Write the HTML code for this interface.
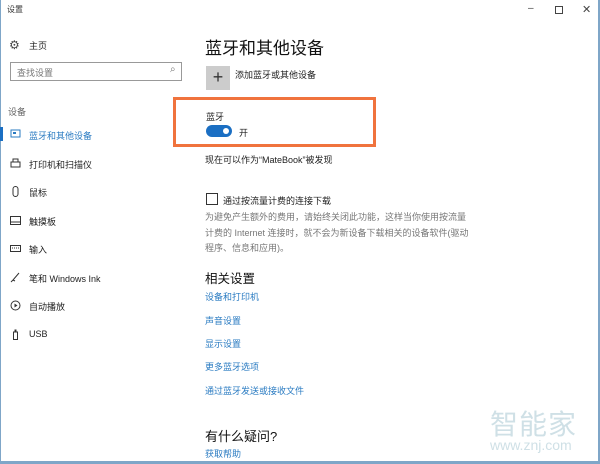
<!DOCTYPE html><html><head><meta charset="utf-8"><style>
*{margin:0;padding:0;box-sizing:border-box}
body{width:600px;height:464px;background:#fff;position:relative;overflow:hidden;font-family:"Liberation Sans","Noto Sans CJK SC",sans-serif;color:#222}
.a{position:absolute;white-space:nowrap}
.s{font-size:9px}
.l{font-size:9px;color:#2a7bc2}
.ic{position:absolute;left:10px;width:11px;height:11px}
</style></head><body>
<div class="a" style="left:0;top:0;width:1px;height:464px;background:#7fa6c8"></div>
<div class="a" style="right:0;top:0;width:2px;height:464px;background:#7fa6c8"></div>
<div class="a" style="left:0;top:461px;width:600px;height:3px;background:#7fa6c8"></div>
<div class="a" style="left:7px;top:4px;font-size:8px;color:#333">设置</div>
<div class="a" style="left:528px;top:3px;font-size:10px;color:#444">–</div>
<div class="a" style="left:555px;top:6px;width:8px;height:8px;border:1px solid #444"></div>
<div class="a" style="left:582px;top:3px;font-size:11px;color:#444">✕</div>

<div class="a" style="left:9px;top:38px;font-size:12px;color:#444">⚙</div>
<div class="a s" style="left:29px;top:39px">主页</div>
<div class="a" style="left:10px;top:62px;width:172px;height:19px;border:1px solid #999;background:#fff"></div>
<div class="a s" style="left:17px;top:66px;color:#777">查找设置</div>
<div class="a" style="left:170px;top:64px;font-size:10px;color:#777">⌕</div>
<div class="a s" style="left:8px;top:105px;color:#666">设备</div>
<div class="a" style="left:0;top:127px;width:3px;height:14px;background:#1b6fc3"></div>
<svg class="ic" style="top:129px" viewBox="0 0 11 11"><rect x="1" y="1" width="9" height="7" fill="none" stroke="#2a7bc2"/><rect x="3" y="3" width="3" height="2" fill="#2a7bc2"/></svg>
<div class="a l" style="left:29px;top:129px">蓝牙和其他设备</div>
<svg class="ic" style="top:158px" viewBox="0 0 11 11"><rect x="1" y="4" width="9" height="5" fill="none" stroke="#333"/><rect x="3" y="1" width="5" height="3" fill="none" stroke="#333"/></svg>
<div class="a s" style="left:29px;top:158px">打印机和扫描仪</div>
<svg class="ic" style="top:186px" viewBox="0 0 11 11"><rect x="3" y="0.5" width="5" height="10" rx="2.5" fill="none" stroke="#333"/></svg>
<div class="a s" style="left:29px;top:186px">鼠标</div>
<svg class="ic" style="top:215px" viewBox="0 0 11 11"><rect x="0.5" y="1.5" width="10" height="8" fill="none" stroke="#333"/><line x1="1" y1="7" x2="10" y2="7" stroke="#333"/></svg>
<div class="a s" style="left:29px;top:215px">触摸板</div>
<svg class="ic" style="top:243px" viewBox="0 0 11 11"><rect x="0.5" y="2.5" width="10" height="6" fill="none" stroke="#333"/><line x1="2" y1="5" x2="9" y2="5" stroke="#333" stroke-dasharray="1 1"/></svg>
<div class="a s" style="left:29px;top:243px">输入</div>
<svg class="ic" style="top:272px" viewBox="0 0 11 11"><path d="M9 1 L3 8 L1 10 M3 8 L5 9" fill="none" stroke="#333"/></svg>
<div class="a s" style="left:29px;top:272px">笔和 Windows Ink</div>
<svg class="ic" style="top:300px" viewBox="0 0 11 11"><circle cx="5.5" cy="5.5" r="4.5" fill="none" stroke="#333"/><path d="M4.5 3.5 L7.5 5.5 L4.5 7.5Z" fill="#333"/></svg>
<div class="a s" style="left:29px;top:300px">自动播放</div>
<svg class="ic" style="top:329px" viewBox="0 0 11 11"><rect x="3.5" y="3" width="4" height="7.5" fill="none" stroke="#333"/><rect x="4.5" y="0.5" width="2" height="2.5" fill="#333"/></svg>
<div class="a s" style="left:29px;top:329px">USB</div>

<div class="a" style="left:205px;top:34px;font-size:17px;color:#111">蓝牙和其他设备</div>
<div class="a" style="left:206px;top:66px;width:24px;height:24px;background:#ccc;text-align:center;line-height:23px;font-size:18px;color:#333">+</div>
<div class="a s" style="left:235px;top:68px">添加蓝牙或其他设备</div>
<div class="a" style="left:173px;top:97px;width:203px;height:50px;border:3px solid #f0733d"></div>
<div class="a s" style="left:206px;top:110px">蓝牙</div>
<div class="a" style="left:206px;top:125px;width:26px;height:12px;border-radius:6px;background:#1b6fc3"></div>
<div class="a" style="left:223px;top:128px;width:6px;height:6px;border-radius:3px;background:#fff"></div>
<div class="a s" style="left:239px;top:126px">开</div>
<div class="a s" style="left:205px;top:153px">现在可以作为“MateBook”被发现</div>
<div class="a" style="left:206px;top:193px;width:12px;height:12px;border:1.5px solid #333"></div>
<div class="a s" style="left:223px;top:194px">通过按流量计费的连接下载</div>
<div class="a" style="left:205px;top:210px;font-size:9px;line-height:15.5px;color:#777">为避免产生额外的费用，请始终关闭此功能，这样当你使用按流量<br>计费的 Internet 连接时，就不会为新设备下载相关的设备软件(驱动<br>程序、信息和应用)。</div>
<div class="a" style="left:205px;top:268px;font-size:12.5px;color:#111">相关设置</div>
<div class="a l" style="left:205px;top:290px">设备和打印机</div>
<div class="a l" style="left:205px;top:314px">声音设置</div>
<div class="a l" style="left:205px;top:337px">显示设置</div>
<div class="a l" style="left:205px;top:360px">更多蓝牙选项</div>
<div class="a l" style="left:205px;top:384px">通过蓝牙发送或接收文件</div>
<div class="a" style="left:205px;top:426px;font-size:13px;color:#111">有什么疑问?</div>
<div class="a l" style="left:205px;top:447px">获取帮助</div>

<div class="a" style="left:490px;top:403px;font-size:28px;color:#cfe0e6;letter-spacing:1px">智能家</div>
<div class="a" style="left:490px;top:437px;font-size:14px;color:#cfe0e6">www.znj.com</div>
</body></html>
